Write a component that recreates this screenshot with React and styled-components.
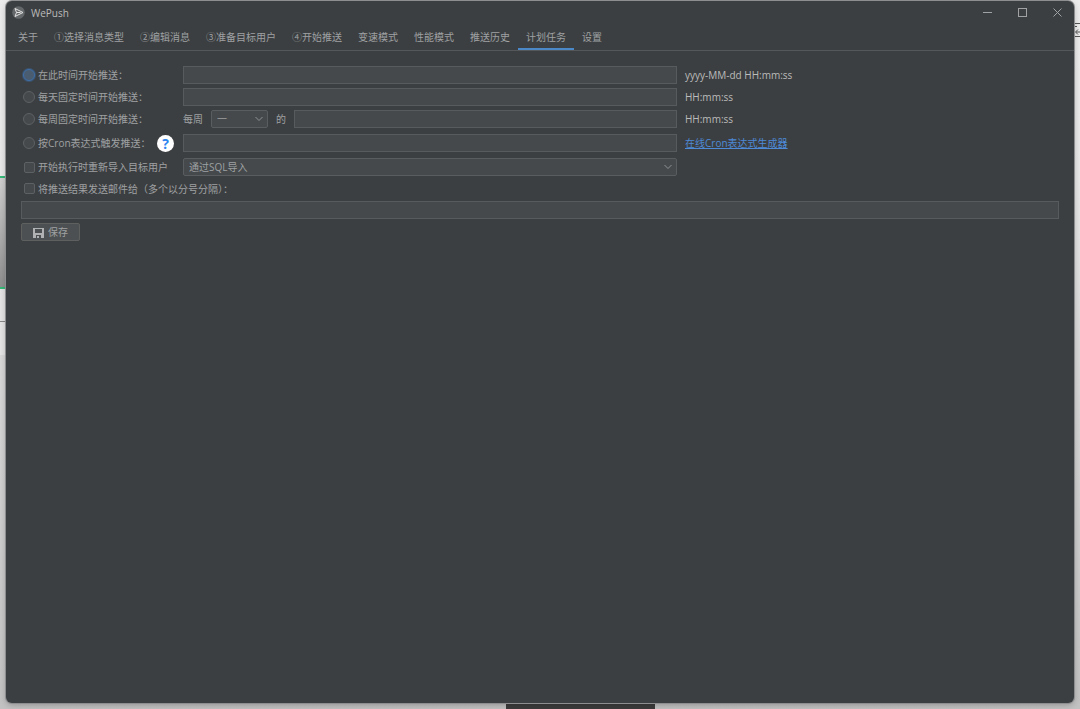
import React, { useState } from "react";
import styled, { createGlobalStyle } from "styled-components";

const Global = createGlobalStyle`
  *, *::before, *::after { box-sizing: border-box; }
  body {
    margin: 0;
    background: #c4c4c4;
    font-family: "Open Sans", "Noto Sans CJK SC", sans-serif;
    font-size: 10px;
    line-height: 14px;
    color: #9fa1a3;
  }
  input, select, button { font: inherit; color: inherit; margin: 0; }
`;

const Desktop = styled.div`
  position: relative;
  display: flex;
  min-height: 100vh;
  padding: 1px 6px 6px;
  background: linear-gradient(#ececec 0, #e8e8e8 25%, #d8d8d8 50%, #c2c2c2 100%);
`;

const Behind = styled.div`
  position: absolute;
  left: 0;
  top: ${(p) => p.$top}px;
  width: 6px;
  height: ${(p) => p.$height}px;
  background: ${(p) => p.$color};
`;

const Dock = styled.div`
  position: absolute;
  left: 506px;
  bottom: 0;
  width: 149px;
  height: 6px;
  background: #3c3c3c;
`;

const PeekIcon = styled.svg`
  position: absolute;
  right: 0;
  top: 22px;
`;

const Window = styled.div`
  position: relative;
  flex: 1;
  min-width: 0;
  background: #3c3f41;
  border-radius: 6px;
  box-shadow: 0 0 0 1px #8c8e90, 0 2px 6px rgba(0, 0, 0, 0.25);
`;

const TitleBar = styled.header`
  display: flex;
  align-items: center;
  height: 23px;
  padding: 0 11px 0 6px;
`;

const Title = styled.h1`
  flex: 1;
  margin: 0 0 0 6px;
  font-size: 10px;
  font-weight: 400;
  color: #bbbbbb;
`;

const WindowButtons = styled.div`
  display: flex;
  gap: 24px;
`;

const WindowButton = styled.button`
  display: flex;
  padding: 0;
  border: 0;
  background: none;
  color: #a0a2a4;
`;

const Tabs = styled.nav`
  display: flex;
  height: 27px;
  padding-left: 4px;
  border-bottom: 1px solid #55585a;
`;

const Tab = styled.button`
  height: 26px;
  padding: 0 8px;
  border: 0;
  background: none;
  white-space: nowrap;
  box-shadow: ${(p) => (p.$active ? "inset 0 -2px #4a88c7" : "none")};
`;

const Form = styled.form`
  display: flex;
  flex-direction: column;
  gap: 4px;
  padding: 15px;
`;

const Grid = styled.div`
  display: grid;
  grid-template-columns: 154px minmax(0, 494fr) minmax(0, 374fr);
  column-gap: 8px;
  row-gap: 4px;
  align-items: center;
  grid-template-rows: 18px 18px 18px 22px 18px;
`;

const Choice = styled.label`
  display: flex;
  align-items: center;
  gap: 3px;
  min-height: 17px;
  padding-left: 2px;
  white-space: nowrap;
`;

const Radio = styled.input`
  appearance: none;
  flex: none;
  width: 12px;
  height: 12px;
  border: 1px solid #5e6163;
  border-radius: 50%;
  background: #45494b;
  &[type="radio"]:checked {
    border-color: #3f6ea5;
    background: #4a5c70;
    box-shadow: 0 0 0 1px #3a5370;
  }
`;

const Check = styled(Radio)`
  width: 11px;
  height: 11px;
  margin-left: 1px;
  border-radius: 2px;
`;

const Field = styled.input`
  width: 100%;
  min-width: 0;
  height: 18px;
  padding: 0 5px;
  border: 1px solid #585b5d;
  border-radius: 0;
  background: #45494b;
`;

const SelectBox = styled.div`
  display: grid;
  align-items: center;
  width: ${(p) => p.$width};
  flex: none;
  & > * { grid-area: 1 / 1; }
  & > svg { justify-self: end; margin-right: 5px; pointer-events: none; }
`;

const Select = styled.select`
  appearance: none;
  width: 100%;
  height: 18px;
  padding: 0 5px;
  border: 1px solid #5a5d5f;
  border-radius: 2px;
  background: #45494b;
`;

const Inline = styled.div`
  display: flex;
  align-items: center;
  gap: 8px;
  white-space: nowrap;
`;

const CronLabel = styled.div`
  display: flex;
  align-items: center;
  justify-content: space-between;
  padding-right: 1px;
`;

const Help = styled.button`
  width: 17px;
  height: 17px;
  padding: 0;
  border: 0;
  border-radius: 50%;
  background: #ffffff;
  color: #2d86f0;
  font-size: 14px;
  font-weight: 700;
  line-height: 17px;
`;

const Hint = styled.span`
  color: #bbbbbb;
`;

const Link = styled.a`
  justify-self: start;
  color: #4d8ad8;
  text-decoration: underline;
`;

const Save = styled.button`
  display: flex;
  align-items: center;
  justify-content: center;
  align-self: flex-start;
  gap: 4px;
  width: 59px;
  height: 18px;
  padding: 0;
  border: 1px solid #5e6060;
  border-radius: 2px;
  background: #4c5052;
`;

const Chevron = () => (
  <svg width="8" height="6" viewBox="0 0 8 6" fill="none" stroke="#909294">
    <path d="M.5 1 4 4.5 7.500 1" />
  </svg>
);

const tabs = [
  "关于", "①选择消息类型", "②编辑消息", "③准备目标用户", "④开始推送",
  "变速模式", "性能模式", "推送历史", "计划任务", "设置",
];

export default function App() {
  const [tab, setTab] = useState("计划任务");
  const [mode, setMode] = useState("once");
  const radio = (value) => (
    <Radio type="radio" name="mode" checked={mode === value} onChange={() => setMode(value)} />
  );

  return (
    <Desktop>
      <Global />
      <Behind $top={176} $height={2} $color="#35b878" />
      <Behind $top={178} $height={109} $color="linear-gradient(#cfcfcf, #8f8f8f)" />
      <Behind $top={287} $height={2} $color="#35b878" />
      <Behind $top={289} $height={66} $color="#e4e4e4" />
      <Behind $top={321} $height={1} $color="#888888" />
      <Dock />
      <PeekIcon width="6" height="16" viewBox="0 0 6 16" fill="none" stroke="#555">
        <path d="M0 1.500h6M0 14.500h6M0 4.500h3M6 10H2M4 7.500 1.500 10 4 12.500" />
      </PeekIcon>
      <Window>
        <TitleBar>
          <svg width="13" height="13" viewBox="0 0 13 13" aria-hidden="true">
            <circle cx="6.500" cy="6.500" r="6.300" fill="#65686a" />
            <path d="M3 2.500 11 6.500 3 10.500 4.500 6.500ZM4.500 6.500H8.500" fill="none" stroke="#e4e4e4" />
          </svg>
          <Title>WePush</Title>
          <WindowButtons>
            <WindowButton aria-label="最小化">
              <svg width="11" height="11" fill="none" stroke="currentColor"><path d="M1 5.500h9" /></svg>
            </WindowButton>
            <WindowButton aria-label="最大化">
              <svg width="11" height="11" fill="none" stroke="currentColor"><rect x="1.500" y="1.500" width="8" height="8" /></svg>
            </WindowButton>
            <WindowButton aria-label="关闭">
              <svg width="11" height="11" fill="none" stroke="currentColor"><path d="m1.500 1.500 8 8m0-8-8 8" /></svg>
            </WindowButton>
          </WindowButtons>
        </TitleBar>
        <Tabs>
          {tabs.map((name) => (
            <Tab key={name} $active={name === tab} onClick={() => setTab(name)}>{name}</Tab>
          ))}
        </Tabs>
        <Form onSubmit={(e) => e.preventDefault()}>
          <Grid>
            <Choice>{radio("once")}在此时间开始推送：</Choice>
            <Field aria-label="开始时间" />
            <Hint>yyyy-MM-dd HH:mm:ss</Hint>

            <Choice>{radio("daily")}每天固定时间开始推送：</Choice>
            <Field aria-label="每天时间" />
            <Hint>HH:mm:ss</Hint>

            <Choice>{radio("weekly")}每周固定时间开始推送：</Choice>
            <Inline>
              <span>每周</span>
              <SelectBox $width="57px">
                <Select aria-label="星期">
                  <option>一</option><option>二</option><option>三</option><option>四</option>
                  <option>五</option><option>六</option><option>日</option>
                </Select>
                <Chevron />
              </SelectBox>
              <span>的</span>
              <Field aria-label="每周时间" />
            </Inline>
            <Hint>HH:mm:ss</Hint>

            <CronLabel>
              <Choice>{radio("cron")}按Cron表达式触发推送：</Choice>
              <Help type="button">?</Help>
            </CronLabel>
            <Field aria-label="Cron表达式" />
            <Link href="#cron">在线Cron表达式生成器</Link>

            <Choice><Check type="checkbox" />开始执行时重新导入目标用户</Choice>
            <SelectBox $width="100%">
              <Select aria-label="导入方式"><option>通过SQL导入</option></Select>
              <Chevron />
            </SelectBox>
          </Grid>
          <Choice><Check type="checkbox" />将推送结果发送邮件给（多个以分号分隔）：</Choice>
          <Field aria-label="邮件地址" />
          <Save>
            <svg width="11" height="11" viewBox="0 0 11 11" fill="#afb1b3" fillRule="evenodd" aria-hidden="true">
              <path d="M0 1h11v10H0ZM2 2v4h7V2ZM3 8v3h5V8ZM4 9h2v2H4Z" />
            </svg>
            保存
          </Save>
        </Form>
      </Window>
    </Desktop>
  );
}
